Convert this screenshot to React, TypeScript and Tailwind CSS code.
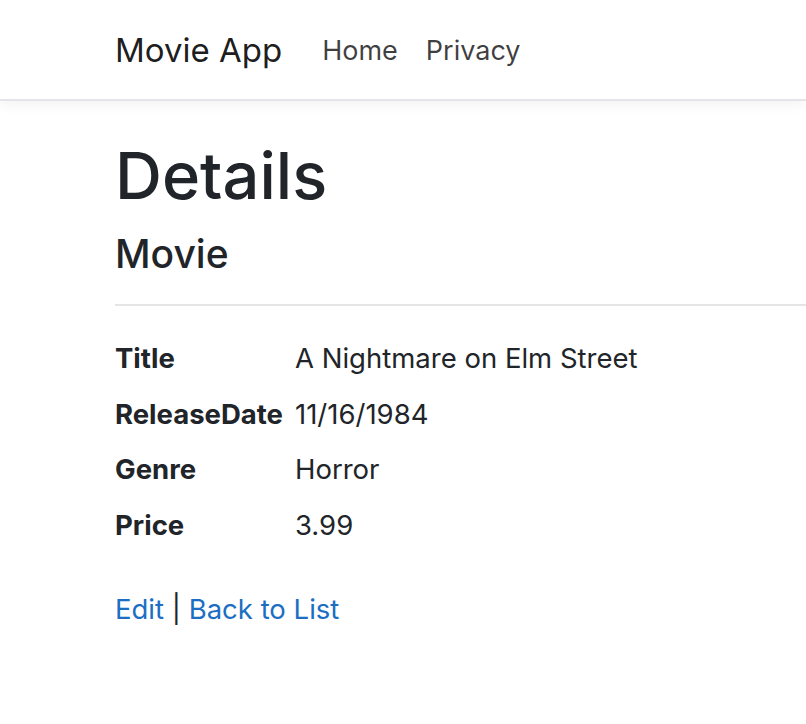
export default function App() {
  const rows = [
    ["Title", "A Nightmare on Elm Street"],
    ["ReleaseDate", "11/16/1984"],
    ["Genre", "Horror"],
    ["Price", "3.99"],
  ];

  return (
    <div className="min-h-screen bg-white text-[#212529] font-['Inter','Liberation_Sans',sans-serif]">
      <nav className="h-[101px] pt-[3px] flex items-center pl-[115px] bg-white border-b-2 border-[#e3e5e8] shadow-[0_4px_12px_rgba(0,0,0,0.05)]">
        <a className="text-[33px] text-black/90 mr-[26px]">Movie App</a>
        <a className="text-[27px] text-black/75 px-[14px]">Home</a>
        <a className="text-[27px] text-black/75 px-[14px]">Privacy</a>
      </nav>
      <main className="pl-[115px]">
        <h1 className="text-[65px] font-medium leading-[1.2] mt-[36px] mb-[16px]">Details</h1>
        <h4 className="text-[39px] font-medium leading-[1.2]">Movie</h4>
        <hr className="border-t-2 border-[#e5e5e5] mt-[26px] mb-[32px]" />
        <dl className="text-[27.5px] leading-[1.5]">
          {rows.map(([k, v]) => (
            <div key={k} className="flex mb-[14.5px]">
              <dt className="w-[180px] font-bold">{k}</dt>
              <dd>{v}</dd>
            </div>
          ))}
        </dl>
        <div className="text-[27.5px] leading-[1.5] mt-[43px]">
          <a className="text-[#1b6ec2]">Edit</a> | <a className="text-[#1b6ec2]">Back to List</a>
        </div>
      </main>
    </div>
  );
}
